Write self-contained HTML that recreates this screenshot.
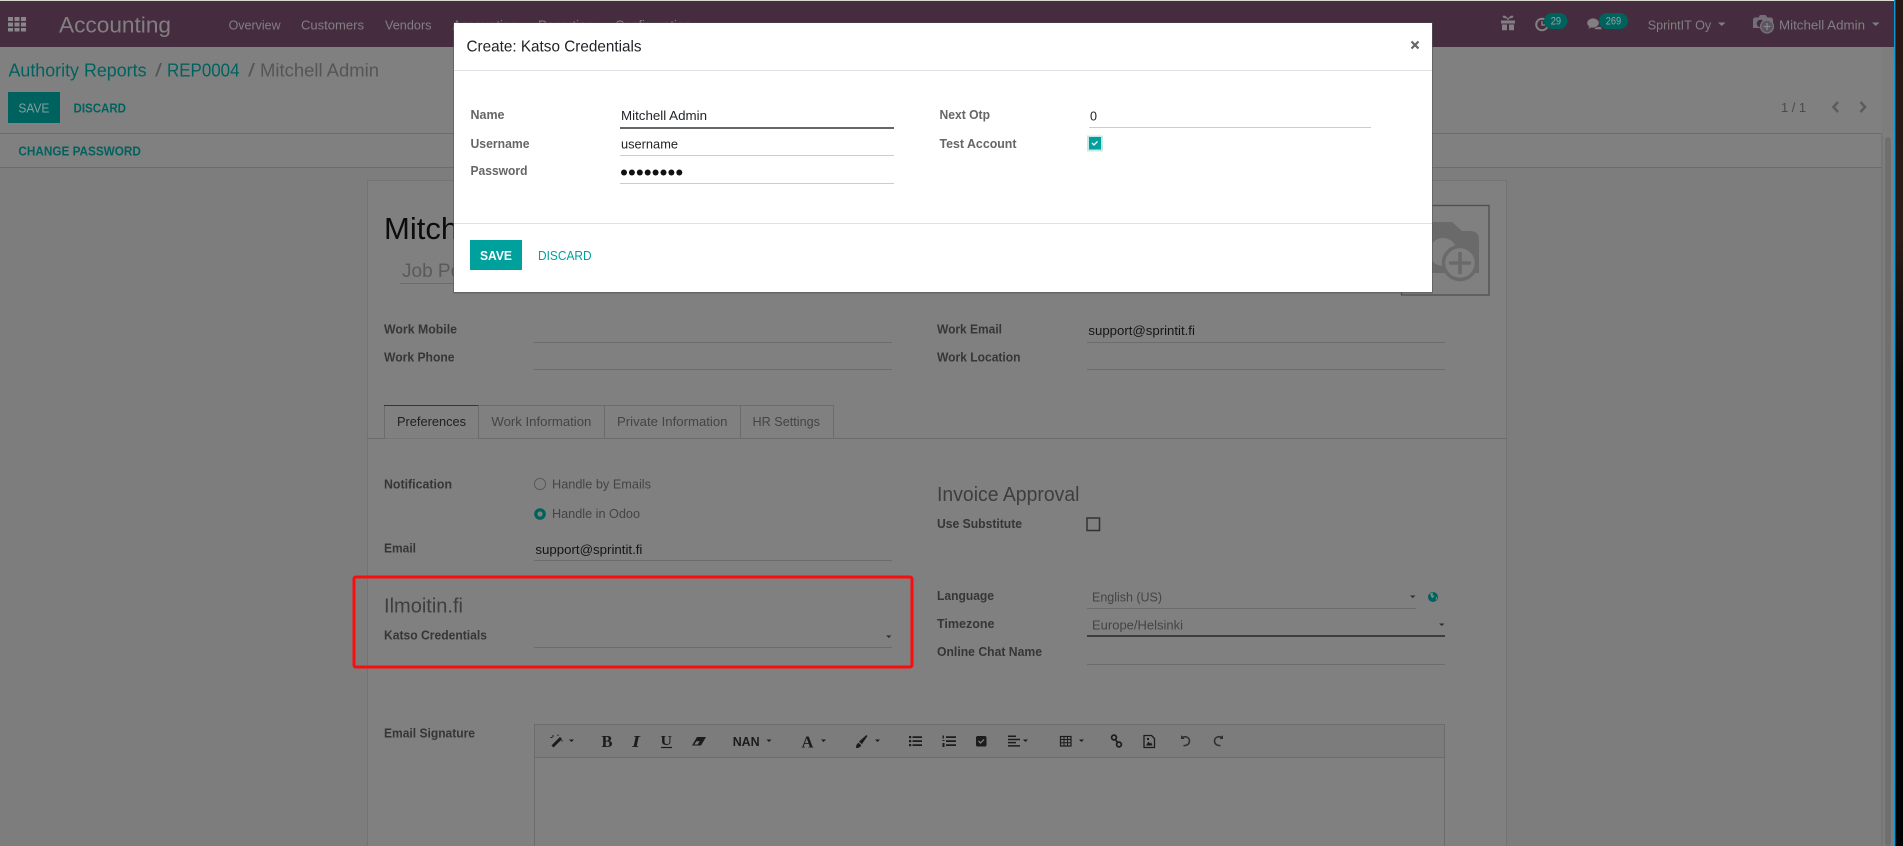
<!DOCTYPE html>
<html lang="en"><head><meta charset="utf-8"><title>Create: Katso Credentials</title>
<style>
html,body{margin:0;padding:0;width:1903px;height:846px;overflow:hidden;background:#000}
svg{display:block;position:absolute;left:0;top:0}
text{font-family:"Liberation Sans",sans-serif;font-size:13px}
.l{font-weight:700;fill:#363636}
.ml{font-weight:700;fill:#666}
.v{fill:#151515}
.g{fill:#444}
.n{fill:#837e82}
.t{fill:#00625f}
.h{font-size:20px;fill:#3e3e3e}
.ln{stroke:#6c6c6c;stroke-width:1;fill:none}
.ic{fill:#1c1c1c}
.ics{stroke:#1c1c1c;fill:none}
</style></head>
<body>
<svg width="1903" height="846" viewBox="0 0 1903 846" xmlns="http://www.w3.org/2000/svg">
<defs><linearGradient id="wp" x1="0" y1="0" x2="0" y2="1"><stop offset="0" stop-color="#2a1612"/><stop offset=".28" stop-color="#2e1a14"/><stop offset=".45" stop-color="#070504"/><stop offset="1" stop-color="#000"/></linearGradient></defs>
<rect x="1895" y="0" width="8" height="846" fill="url(#wp)"/>
<rect x="0" y="0" width="1894" height="846" fill="#7d7d7d"/>
<rect x="1894" y="0" width="1.4" height="846" fill="#0d98d6"/>
<!-- navbar -->
<rect x="0" y="0" width="1894" height="47" fill="#452d3f"/>
<rect x="0" y="0" width="1894" height="1" fill="#dcd8d0"/>
<g fill="#8a878a"><rect x="8" y="17" width="5" height="4"/><rect x="14.5" y="17" width="5" height="4"/><rect x="21" y="17" width="5" height="4"/><rect x="8" y="22.5" width="5" height="4"/><rect x="14.5" y="22.5" width="5" height="4"/><rect x="21" y="22.5" width="5" height="4"/><rect x="8" y="28" width="5" height="3.5"/><rect x="14.5" y="28" width="5" height="3.5"/><rect x="21" y="28" width="5" height="3.5"/></g>
<text x="59" y="32.5" class="n" style="font-size:22px" textLength="112" lengthAdjust="spacingAndGlyphs">Accounting</text>
<text x="228.6" y="29.5" class="n" textLength="52" lengthAdjust="spacingAndGlyphs">Overview</text>
<text x="301" y="29.5" class="n" textLength="63" lengthAdjust="spacingAndGlyphs">Customers</text>
<text x="385" y="29.5" class="n" textLength="46.5" lengthAdjust="spacingAndGlyphs">Vendors</text>
<text x="452.5" y="29.5" class="n" textLength="65" lengthAdjust="spacingAndGlyphs">Accounting</text>
<text x="538" y="29.5" class="n" textLength="55" lengthAdjust="spacingAndGlyphs">Reporting</text>
<text x="615" y="29.5" class="n" textLength="76" lengthAdjust="spacingAndGlyphs">Configuration</text>
<!-- nav right -->
<path d="M1501 20.5h14v3h-14zM1502 24.5h5v5.8h-5zM1509 24.5h5v5.8h-5zM1507.2 20v-1.5c-3-0-5-1-4.500-2.200 .6-1.400 3.600-.6 5.300 2.200 1.700-2.800 4.700-3.600 5.300-2.200 .5 1.200-1.500 2.200-4.500 2.200V20z" fill="#837e82"/>
<circle cx="1542" cy="24.5" r="5.8" fill="none" stroke="#837e82" stroke-width="2"/>
<path d="M1542 21v4h3" fill="none" stroke="#837e82" stroke-width="1.5"/>
<rect x="1544" y="13" width="23.5" height="16" rx="8" fill="#00625c"/>
<text x="1550.7" y="24.5" style="font-size:11px;fill:#8fa8a5" textLength="10.4" lengthAdjust="spacingAndGlyphs">29</text>
<ellipse cx="1593" cy="23" rx="5.8" ry="4.6" fill="#837e82"/><path d="M1590 26l-1.800 3 4-2z" fill="#837e82"/><path d="M1594 29c3 .4 6 .3 8 .2l-1.500-2.500-4 .5z" fill="#837e82"/>
<rect x="1599" y="13" width="29" height="16" rx="8" fill="#00625c"/>
<text x="1605.7" y="24.5" style="font-size:11px;fill:#8fa8a5" textLength="15.4" lengthAdjust="spacingAndGlyphs">269</text>
<text x="1647.7" y="29.5" class="n" textLength="63.5" lengthAdjust="spacingAndGlyphs">SprintIT Oy</text>
<path d="M1718 22.500h7.500l-3.750 3.500z" fill="#837e82"/>
<path d="M1753 20c0-1.500 1-2.500 2.500-2.500h3l1.500-2.500h5.500l2 2.500h3c1.500 0 2.500 1 2.500 2.500V28h-20z" fill="#77737a" opacity=".95"/>
<circle cx="1760.500" cy="23.500" r="3.800" fill="#452d3f"/>
<circle cx="1767" cy="26.500" r="6.400" fill="#5c5560" stroke="#77737a" stroke-width="1.400"/>
<path d="M1767 23v7M1763.500 26.500h7" stroke="#8a878a" stroke-width="1.300"/>
<text x="1779" y="29.500" class="n" textLength="86" lengthAdjust="spacingAndGlyphs">Mitchell Admin</text>
<path d="M1872 22.500h7.500l-3.750 3.500z" fill="#837e82"/>
<!-- control panel -->
<rect x="0" y="47" width="1882" height="120" fill="#808080"/>
<text x="8.500" y="76.500" class="t" style="font-size:18px" textLength="138" lengthAdjust="spacingAndGlyphs">Authority Reports</text>
<text x="155" y="76.500" style="font-size:18px;fill:#555" textLength="7" lengthAdjust="spacingAndGlyphs">/</text>
<text x="167" y="76.500" class="t" style="font-size:18px" textLength="72.500" lengthAdjust="spacingAndGlyphs">REP0004</text>
<text x="248" y="76.500" style="font-size:18px;fill:#555" textLength="7" lengthAdjust="spacingAndGlyphs">/</text>
<text x="260" y="76.500" style="font-size:18px;fill:#555" textLength="119" lengthAdjust="spacingAndGlyphs">Mitchell Admin</text>
<rect x="8" y="92" width="52" height="31" fill="#00625f"/>
<text x="18.400" y="112.500" style="fill:#7f9f9e" textLength="31" lengthAdjust="spacingAndGlyphs">SAVE</text>
<text x="73.500" y="112.500" class="t" style="font-weight:700;font-size:12.500px" textLength="52.500" lengthAdjust="spacingAndGlyphs">DISCARD</text>
<text x="18.400" y="155.500" class="t" style="font-weight:700;font-size:12.500px" textLength="122.500" lengthAdjust="spacingAndGlyphs">CHANGE PASSWORD</text>
<text x="1781" y="112" style="fill:#4a4a4a" textLength="25" lengthAdjust="spacingAndGlyphs">1 / 1</text>
<path d="M1838 102l-4.500 5 4.500 5M1860.500 102l4.500 5-4.500 5" fill="none" stroke="#5c5c5c" stroke-width="2.600"/>
<path class="ln" d="M0 133.500H1894M0 167.500H1882"/>
<!-- scrollbar -->
<rect x="1882" y="133" width="12" height="713" fill="#7e7e7e"/>
<path d="M1882 134V846" stroke="#6e6e6e" stroke-width="1"/>
<rect x="1885" y="137" width="6" height="709" rx="3" fill="#6f6f6f"/>
<!-- sheet -->
<rect x="367.500" y="180.500" width="1139" height="680" fill="#808080" stroke="#737373"/>
<text x="384" y="239" style="font-size:31px;fill:#0c0c0c">Mitchell Admin</text>
<text x="402" y="277" style="font-size:19px;fill:#5a5a5a">Job Position</text>
<path class="ln" d="M400 283.500H1380"/>
<rect x="1401.500" y="205.500" width="87.500" height="89.500" fill="#808080" stroke="#4f4f4f" stroke-width="1.300"/>
<path d="M1404 222H1452L1462 231H1470q9 0 9 9V273H1404z" fill="#6a6a6a"/>
<circle cx="1443" cy="252" r="14" fill="#808080"/>
<circle cx="1460" cy="263" r="16.500" fill="#808080" stroke="#6a6a6a" stroke-width="3.500"/>
<path d="M1460 252v22M1449 263h22" stroke="#6a6a6a" stroke-width="3.600"/>
<text x="384" y="333.500" class="l" textLength="73" lengthAdjust="spacingAndGlyphs">Work Mobile</text>
<text x="384" y="361.500" class="l" textLength="70.500" lengthAdjust="spacingAndGlyphs">Work Phone</text>
<text x="937" y="333.500" class="l" textLength="65" lengthAdjust="spacingAndGlyphs">Work Email</text>
<text x="937" y="361.500" class="l" textLength="83.500" lengthAdjust="spacingAndGlyphs">Work Location</text>
<text x="1088.400" y="335" class="v" textLength="106.500" lengthAdjust="spacingAndGlyphs">support@sprintit.fi</text>
<path class="ln" d="M534 342.500H892M534 369.500H892M1087 342.500H1445M1087 369.500H1445"/>
<!-- tabs -->
<path class="ln" d="M367.500 438.500H1506"/>
<rect x="384.500" y="405.500" width="449" height="33" fill="#808080"/>
<path class="ln" d="M478.500 405.500V438.500M604.500 405.500V438.500M740.500 405.500V438.500M833.500 405.500V438.500M478.500 405.500H833.500M478.500 438.500H833.500"/>
<path class="ln" d="M384.500 438.500V405.500"/>
<path d="M384 405.500H478.500" stroke="#442d3e" stroke-width="1"/>
<text x="397" y="426" style="fill:#1f1f1f" textLength="69" lengthAdjust="spacingAndGlyphs">Preferences</text>
<text x="491.400" y="426" class="g" textLength="100" lengthAdjust="spacingAndGlyphs">Work Information</text>
<text x="617" y="426" class="g" textLength="110.500" lengthAdjust="spacingAndGlyphs">Private Information</text>
<text x="752.500" y="426" class="g" textLength="67.500" lengthAdjust="spacingAndGlyphs">HR Settings</text>
<!-- prefs left -->
<text x="384" y="488.500" class="l" textLength="68" lengthAdjust="spacingAndGlyphs">Notification</text>
<circle cx="540" cy="484" r="5.600" fill="none" stroke="#5a5a5a"/>
<text x="552" y="488.500" class="g" textLength="99" lengthAdjust="spacingAndGlyphs">Handle by Emails</text>
<circle cx="540" cy="514" r="4.200" fill="#808080" stroke="#00625c" stroke-width="3.200"/>
<text x="552" y="518" class="g" textLength="88" lengthAdjust="spacingAndGlyphs">Handle in Odoo</text>
<text x="384" y="552.500" class="l" textLength="32" lengthAdjust="spacingAndGlyphs">Email</text>
<text x="535.400" y="554" class="v" textLength="107" lengthAdjust="spacingAndGlyphs">support@sprintit.fi</text>
<path class="ln" d="M534 560.500H892"/>
<text x="384" y="612.500" class="h" textLength="79" lengthAdjust="spacingAndGlyphs">Ilmoitin.fi</text>
<text x="384" y="639.500" class="l" textLength="103" lengthAdjust="spacingAndGlyphs">Katso Credentials</text>
<path class="ln" d="M534 647.500H892"/>
<path d="M886 635.500h5.500l-2.750 2.500z" fill="#2c2c2c"/>
<rect x="354" y="577" width="558" height="90" rx="2" fill="none" stroke="#fb0d0d" stroke-width="3"/>
<!-- prefs right -->
<text x="937" y="501" class="h" textLength="142.500" lengthAdjust="spacingAndGlyphs">Invoice Approval</text>
<text x="937" y="528" class="l" textLength="85" lengthAdjust="spacingAndGlyphs">Use Substitute</text>
<rect x="1087" y="518" width="12.500" height="12.500" fill="none" stroke="#333" stroke-width="1.500"/>
<text x="937" y="600" class="l" textLength="57" lengthAdjust="spacingAndGlyphs">Language</text>
<text x="1092" y="601.500" class="g" textLength="70" lengthAdjust="spacingAndGlyphs">English (US)</text>
<path class="ln" d="M1087 608.500H1416"/>
<path d="M1410 595.500h5.500l-2.750 2.500z" fill="#2c2c2c"/>
<circle cx="1433" cy="597" r="5" fill="#00625c"/><path d="M1430 593.500l3-1-.5 2.500 2 1-2.500 2.500zM1435.500 598l1.500-1v2l-1 1z" fill="#6f8f8c"/>
<text x="937" y="628" class="l" textLength="57.500" lengthAdjust="spacingAndGlyphs">Timezone</text>
<text x="1092" y="629.500" class="g" textLength="91" lengthAdjust="spacingAndGlyphs">Europe/Helsinki</text>
<path d="M1087 636H1445" stroke="#3d3d3d" stroke-width="2"/>
<path d="M1439 623.500h5.500l-2.750 2.500z" fill="#2c2c2c"/>
<text x="937" y="656" class="l" textLength="105" lengthAdjust="spacingAndGlyphs">Online Chat Name</text>
<path class="ln" d="M1087 664.500H1445"/>
<!-- editor -->
<text x="384" y="737.500" class="l" textLength="91" lengthAdjust="spacingAndGlyphs">Email Signature</text>
<rect x="534.500" y="724.500" width="910" height="140" fill="#808080" stroke="#6c6c6c"/>
<rect x="535" y="725" width="909" height="32" fill="#7c7c7c"/>
<path class="ln" d="M534.500 757.500H1444.500"/>
<g>
<path d="M552.500 746.500l8.500-8.500" stroke="#1c1c1c" stroke-width="3"/><path d="M553 735v2M550.500 737.500h2M558 734.500v1.500M562 740v1.500" stroke="#1c1c1c" stroke-width="1" fill="none"/>
<path d="M569 739.500h5l-2.500 2.500zM766.500 739.500h5l-2.500 2.500zM821 739.500h5l-2.500 2.500zM875 739.500h5l-2.500 2.500zM1023 739.500h5l-2.500 2.500zM1079 739.500h5l-2.500 2.500z" class="ic"/>
<text x="601.500" y="747" style="font:700 17px 'Liberation Serif',serif;fill:#1c1c1c" textLength="11" lengthAdjust="spacingAndGlyphs">B</text>
<text x="632" y="747" style="font:italic 700 17px 'Liberation Serif',serif;fill:#1c1c1c" textLength="8" lengthAdjust="spacingAndGlyphs">I</text>
<text x="660.500" y="745" style="font:700 14px 'Liberation Serif',serif;fill:#1c1c1c" textLength="11.500" lengthAdjust="spacingAndGlyphs">U</text>
<path d="M661 747.500h11" stroke="#1c1c1c" stroke-width="1.200"/>
<path d="M697 737H706L701 745.500H692z" class="ic"/><path d="M694.200 744.500l2.300-3.200h3.300l-2.200 3.200z" fill="#7c7c7c"/>
<text x="732.700" y="746" style="font-size:12.500px;font-weight:700;fill:#1c1c1c" textLength="27" lengthAdjust="spacingAndGlyphs">NAN</text>
<text x="801.500" y="747.500" style="font:700 17px 'Liberation Serif',serif;fill:#1c1c1c" textLength="12" lengthAdjust="spacingAndGlyphs">A</text>
<path d="M866.500 735l-7.500 6.500 2.800 2.800 5.700-8.300zM856 748c0-2 .5-4 2.700-5.200l2.500 2.500c-.6 2-3 3-5.200 2.700z" class="ic"/>
<path d="M909 736h2.200v2.200H909zM909 740h2.200v2.200H909zM909 744h2.200v2.200H909zM912.500 736.200H922v1.800h-9.500zM912.500 740.200H922v1.800h-9.500zM912.500 744.200H922v1.800h-9.500z" class="ic"/>
<path d="M942.500 735.500h1.400v3h-1.400zM942.500 740h2v1h-2zM942.500 743h2v4h-2zM946 736.200H956v1.800h-10zM946 740.200H956v1.800h-10zM946 744.200H956v1.800h-10z" class="ic"/>
<rect x="976" y="736" width="10.500" height="10.500" rx="1.800" class="ic"/><path d="M978.500 741l2 2 3.500-3.500" stroke="#7c7c7c" stroke-width="1.300" fill="none"/>
<path d="M1008 735.500h8v1.500h-8zM1008 738.700h12v1.500h-12zM1008 741.900h8v1.500h-8zM1008 745.100h12v1.500h-12z" class="ic"/>
<rect x="1060.500" y="736.500" width="10.500" height="9.500" class="ics" stroke-width="1.200"/><path d="M1060.500 739.500h10.500M1060.500 742.700h10.500M1064 736.500v9.500M1067.500 736.500v9.500" class="ics"/>
<circle cx="1114" cy="737.500" r="2.400" class="ics" stroke-width="1.700"/><circle cx="1119" cy="744.500" r="2.400" class="ics" stroke-width="1.700"/><path d="M1115.500 739.500l2 3" class="ics" stroke-width="1.700"/>
<path d="M1144 735.500h7.500l3 3v9h-10.500z" class="ics" stroke-width="1.300"/><path d="M1146 745.500l2.500-4 1.500 2 1.200-1 1.300 3zM1147 738h2v2h-2z" class="ic"/>
<path d="M1182 737.500c4.500-2.200 7.500 .6 7.500 3.500s-2.500 5-6 4.500" class="ics" stroke-width="1.500" opacity=".8"/><path d="M1181 735v4h3.500z" class="ic" opacity=".8"/>
<path d="M1222 737.500c-4.500-2.200-7.500 .6-7.500 3.500s2.500 5 6 4.500" class="ics" stroke-width="1.500" opacity=".8"/><path d="M1223 735v4h-3.500z" class="ic" opacity=".8"/>
</g>
<!-- modal -->
<rect x="453" y="22.500" width="980" height="271" fill="#555" opacity=".6"/>
<rect x="454" y="23" width="978" height="269" fill="#fff"/>
<path d="M454 70.500H1432M454 223.500H1432" stroke="#dee2e6" stroke-width="1"/>
<text x="466.500" y="51.500" style="font-size:16px;fill:#212529" textLength="175" lengthAdjust="spacingAndGlyphs">Create: Katso Credentials</text>
<path d="M1411.500 41.500l7 7M1418.500 41.500l-7 7" stroke="#666" stroke-width="2.200"/>
<text x="470.500" y="119" class="ml" textLength="34" lengthAdjust="spacingAndGlyphs">Name</text>
<text x="470.500" y="148" class="ml" textLength="59" lengthAdjust="spacingAndGlyphs">Username</text>
<text x="470.500" y="175" class="ml" textLength="57" lengthAdjust="spacingAndGlyphs">Password</text>
<text x="621" y="120" style="fill:#212529" textLength="86" lengthAdjust="spacingAndGlyphs">Mitchell Admin</text>
<text x="621" y="148.500" style="fill:#212529" textLength="57" lengthAdjust="spacingAndGlyphs">username</text>
<g fill="#111"><circle cx="624" cy="172.500" r="3"/><circle cx="631.900" cy="172.500" r="3"/><circle cx="639.800" cy="172.500" r="3"/><circle cx="647.700" cy="172.500" r="3"/><circle cx="655.600" cy="172.500" r="3"/><circle cx="663.500" cy="172.500" r="3"/><circle cx="671.400" cy="172.500" r="3"/><circle cx="679.300" cy="172.500" r="3"/></g>
<path d="M620 128H894" stroke="#666" stroke-width="2"/>
<path d="M620 155.500H894M620 183.500H894M1089 127.500H1371" stroke="#ccc" stroke-width="1"/>
<text x="939.500" y="119" class="ml" textLength="50.500" lengthAdjust="spacingAndGlyphs">Next Otp</text>
<text x="939.500" y="148" class="ml" textLength="77" lengthAdjust="spacingAndGlyphs">Test Account</text>
<text x="1090" y="120.500" style="fill:#212529" textLength="7" lengthAdjust="spacingAndGlyphs">0</text>
<rect x="1087" y="135.500" width="16" height="16" fill="#c6e9e8"/>
<rect x="1089" y="137" width="12" height="12.500" fill="#00a09d"/>
<path d="M1092 143l2 2 3.500-3.500" stroke="#fff" stroke-width="1.300" fill="none"/>
<rect x="470" y="240" width="52" height="30" fill="#00a09d"/>
<text x="480" y="260" style="fill:#fff;font-weight:700;font-size:12.500px" textLength="32" lengthAdjust="spacingAndGlyphs">SAVE</text>
<text x="538" y="260" style="fill:#00a09d;font-size:12.500px" textLength="53.600" lengthAdjust="spacingAndGlyphs">DISCARD</text>
</svg>
</body></html>
